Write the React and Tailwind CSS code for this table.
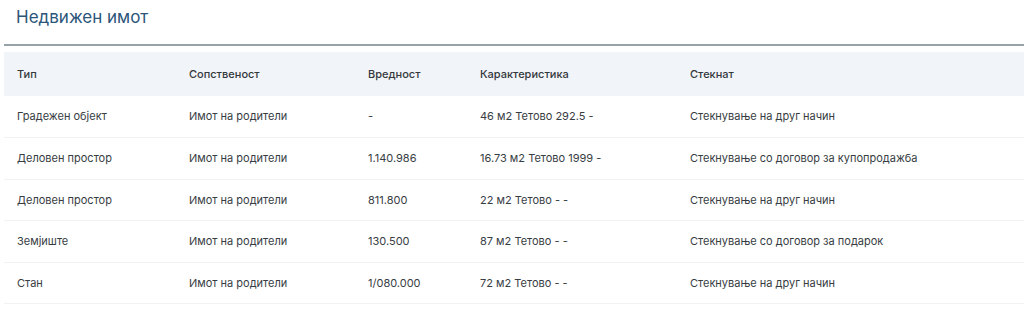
import React from 'react';

const rows = [
    { type: 'Градежен објект', owner: 'Имот на родители', value: '-', info: '46 м2 Тетово 292.5 -', acquired: 'Стекнување на друг начин' },
    { type: 'Деловен простор', owner: 'Имот на родители', value: '1.140.986', info: '16.73 м2 Тетово 1999 -', acquired: 'Стекнување со договор за купопродажба' },
    { type: 'Деловен простор', owner: 'Имот на родители', value: '811.800', info: '22 м2 Тетово - -', acquired: 'Стекнување на друг начин' },
    { type: 'Земјиште', owner: 'Имот на родители', value: '130.500', info: '87 м2 Тетово - -', acquired: 'Стекнување со договор за подарок' },
    { type: 'Стан', owner: 'Имот на родители', value: '1/080.000', info: '72 м2 Тетово - -', acquired: 'Стекнување на друг начин' },
];

const App = () => {
    return (
        <div className="w-[1024px] h-[311px] overflow-hidden bg-white font-['Inter',sans-serif] text-[#373d43]">
            <h2 className="pl-4 pt-[6px] h-[44px] text-[17px] leading-[22px] text-[#2c5579]">Недвижен имот</h2>

            <div className="ml-1 border-t-2 border-[#97a3a8] pt-[6px]">
                <table className="w-full table-fixed border-collapse text-[11px]">
                    <colgroup>
                        <col className="w-[172px]" />
                        <col className="w-[179px]" />
                        <col className="w-[112px]" />
                        <col className="w-[210px]" />
                        <col />
                    </colgroup>
                    <thead>
                        <tr className="bg-[#f1f4f8] h-[44px]">
                            <th className="pl-[13px] text-left font-medium text-[#33383d]">Тип</th>
                            <th className="pl-[13px] text-left font-medium text-[#33383d]">Сопственост</th>
                            <th className="pl-[13px] text-left font-medium text-[#33383d]">Вредност</th>
                            <th className="pl-[13px] text-left font-medium text-[#33383d]">Карактеристика</th>
                            <th className="pl-[13px] text-left font-medium text-[#33383d]">Стекнат</th>
                        </tr>
                    </thead>
                    <tbody>
                        {rows.map((r, idx) => (
                            <tr key={idx} className="h-[41.6px] border-b border-[#f0f2f4]">
                                <td className="pl-[13px]">{r.type}</td>
                                <td className="pl-[13px]">{r.owner}</td>
                                <td className="pl-[13px]">{r.value}</td>
                                <td className="pl-[13px]">{r.info}</td>
                                <td className="pl-[13px]">{r.acquired}</td>
                            </tr>
                        ))}
                    </tbody>
                </table>
            </div>
        </div>
    );
};

export default App;
